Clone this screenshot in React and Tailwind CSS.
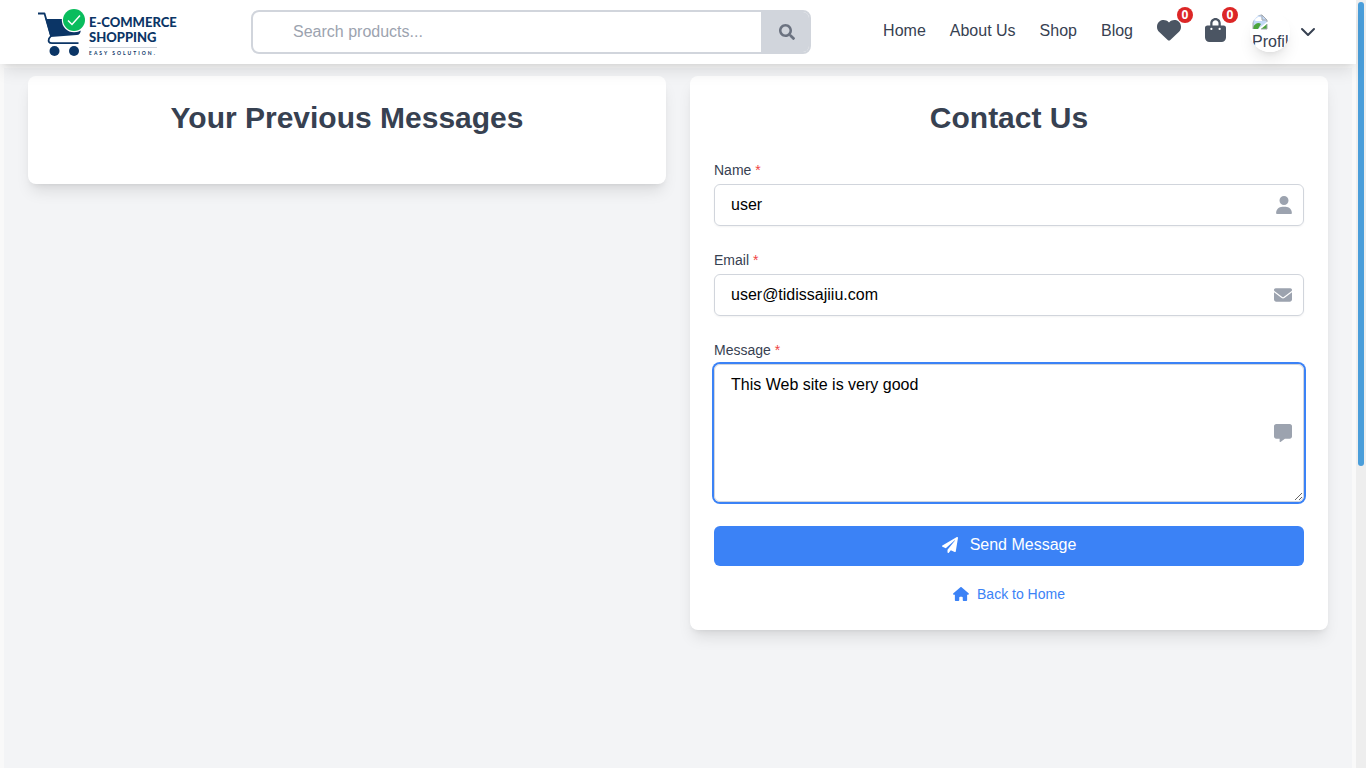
import React from "react";
import { FaBagShopping, FaEnvelope, FaHeart, FaHouse, FaMessage, FaUser } from "react-icons/fa6";
import { FaPaperPlane, FaSearch } from "react-icons/fa";
import { ChevronDown } from "lucide-react";

function Logo() {
  return (
    <a href="#home" className="flex w-[143px] shrink-0 items-start text-[#0b3566]">
      <svg viewBox="0 0 51 50" className="h-[50px] w-[51px] shrink-0" aria-hidden="true">
        <path d="M2 6.500h6.500L15 29l-2 2.500q-1.500 4.700 3 4.700h26.500" fill="none" stroke="currentColor" strokeWidth="1.800" strokeLinejoin="round" />
        <path d="M9.500 12H27q1.500 10.500 13 12.500l4.800-1q-.3 4.200-4 4.600L14.500 30z" fill="currentColor" />
        <circle cx="18.500" cy="44" r="5" fill="currentColor" />
        <circle cx="38" cy="44" r="5" fill="currentColor" />
        <circle cx="38" cy="13" r="12.200" fill="#fff" />
        <circle cx="38" cy="13" r="11" fill="#09bd5d" />
        <path d="M32 13.500l4 4 8-9" fill="none" stroke="#fff" strokeWidth="1.500" />
      </svg>
      <span className="mt-2 flex flex-col items-start whitespace-nowrap pl-0.5 font-['Lato'] text-[13px] leading-[15px] font-black">
        <span>E-COMMERCE</span>
        <span>SHOPPING</span>
        <span className="mt-0.5 border-t border-gray-300 pt-px text-[5px] leading-[8px] font-bold tracking-[2px]">EASY SOLUTION.</span>
      </span>
    </a>
  );
}

function CountLink({ label, href, children }) {
  return (
    <a href={href} aria-label={label} className="relative text-[#4b5563]">
      {children}
      <span className="absolute -top-[11px] -right-3 flex size-4 items-center justify-center rounded-full bg-[#dc2626] font-['Open_Sans'] text-xs leading-4 font-bold text-white">
        0
      </span>
    </a>
  );
}

function Avatar() {
  return (
    <span className="block size-10 overflow-hidden rounded-full bg-white p-[2px]">
      <span className="block size-9 overflow-hidden">
        <svg viewBox="0 0 16 16" className="size-4" aria-hidden="true">
          <path d="M1 1h9l5 5v2L6 15H1z" fill="#c3d9f7" />
          <path d="M3 6q0-2 2-2 1-2 3-1 2 0 2 2 1 1 0 2H4q-1 0-1-1z" fill="#fff" />
          <path d="M1 15v-2q4-6 8-3l-3 5z" fill="#4ba43c" />
          <path d="M9 15l6-5v5z" fill="#4ba43c" />
          <path d="M1 15V1h9l5 5v2M15 10v5H9M10 1v5h5" fill="none" stroke="#a3a8af" />
        </svg>
        <span className="block leading-6">Profile</span>
      </span>
    </span>
  );
}

function Header() {
  return (
    <header className="relative z-10 flex h-16 items-center justify-between bg-white px-9 shadow-lg">
      <Logo />
      <form className="flex h-11 w-[560px] shrink overflow-hidden rounded-lg border-2 border-gray-300" onSubmit={(e) => e.preventDefault()}>
        <input type="search" aria-label="Search products" placeholder="Search products..." className="min-w-0 flex-1 pl-10 text-base outline-none placeholder:text-[#9ca3af]" />
        <button type="submit" aria-label="Search" className="flex w-12 items-center bg-gray-300 pl-[18px] text-[#6b7280]">
          <FaSearch className="size-4" />
        </button>
      </form>
      <nav className="flex items-center gap-6 text-[#374151]">
        <div className="flex items-center gap-6 pb-0.5">
          <a href="#home">Home</a>
          <a href="#about">About Us</a>
          <a href="#shop">Shop</a>
          <a href="#blog">Blog</a>
        </div>
        <div className="flex items-center gap-6 pb-1">
          <CountLink label="Wishlist" href="#wishlist">
            <FaHeart className="size-6" />
          </CountLink>
          <CountLink label="Cart" href="#cart">
            <FaBagShopping className="h-6 w-[21px]" />
          </CountLink>
        </div>
        <button type="button" aria-label="Account menu" className="flex items-center gap-[6px] text-left">
          <span className="rounded-full shadow-lg"><Avatar /></span>
          <ChevronDown className="size-6" />
        </button>
      </nav>
    </header>
  );
}

const fieldClass = "block w-full rounded-md border border-gray-300 px-4 py-2 pr-10 text-base leading-6 text-black shadow-xs outline-none";

function Field({ id, label, icon, children }) {
  return (
    <div>
      <label htmlFor={id} className="block text-sm leading-5 text-[#374151]">
        {label} <span className="text-[#ef4444]">*</span>
      </label>
      <div className="relative mt-1">
        {children}
        <span className="pointer-events-none absolute inset-y-0 right-3 flex items-center text-[#9ca3af]" aria-hidden="true">{icon}</span>
      </div>
    </div>
  );
}

function Card({ title, children }) {
  return (
    <section className="rounded-lg bg-white p-6 shadow-lg">
      <h2 className="mb-6 text-center text-3xl leading-9 font-bold text-[#374151]">{title}</h2>
      {children}
    </section>
  );
}

function ContactForm() {
  return (
    <form className="space-y-6" onSubmit={(e) => e.preventDefault()}>
      <Field id="name" label="Name" icon={<FaUser className="h-[18px] w-4" />}>
        <input id="name" type="text" defaultValue="user" className={fieldClass} />
      </Field>
      <Field id="email" label="Email" icon={<FaEnvelope className="size-[18px]" />}>
        <input id="email" type="email" defaultValue="user@tidissajiiu.com" className={fieldClass} />
      </Field>
      <Field id="message" label="Message" icon={<FaMessage className="size-[18px]" />}>
        <textarea id="message" rows={5} spellCheck={false} defaultValue="This Web site is very good" className={`${fieldClass} resize-y ring-2 ring-[#3b82f6]`} />
      </Field>
      <button type="submit" className="flex h-10 w-full items-center justify-center gap-3 rounded-md bg-[#3b82f6] pb-0.5 text-base text-white">
        <FaPaperPlane className="size-4" aria-hidden="true" />
        Send Message
      </button>
    </form>
  );
}

export default function App() {
  return (
    <div className="flex min-h-screen bg-[#f9f9f9] font-['Liberation_Sans',Arial,sans-serif]">
      <div className="flex min-w-0 flex-1 flex-col">
        <Header />
        <main className="mx-1 mt-1 grid flex-1 grid-cols-2 items-start gap-6 bg-[#f3f4f6] px-6 pt-2">
          <Card title="Your Previous Messages" />
          <Card title="Contact Us">
            <ContactForm />
            <div className="mt-4 flex h-6 items-center justify-center">
              <a href="#home" className="flex items-center gap-2 text-sm text-[#3b82f6]">
                <FaHouse className="h-[14px] w-4" aria-hidden="true" />
                Back to Home
              </a>
            </div>
          </Card>
        </main>
      </div>
      <div className="w-[10px] shrink-0 bg-[#eeeeee] p-[2px]" aria-hidden="true">
        <div className="h-[464px] rounded-full bg-[#4a9eda]" />
      </div>
    </div>
  );
}
